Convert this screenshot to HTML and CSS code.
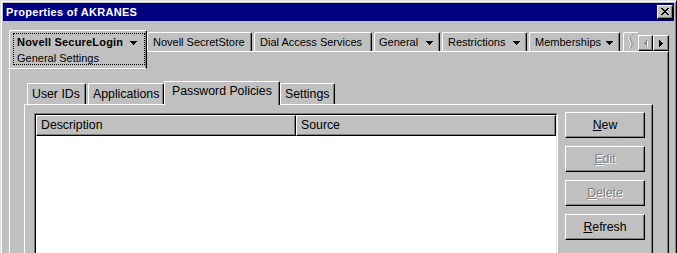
FILE: index.html
```html
<!DOCTYPE html>
<html>
<head>
<meta charset="utf-8">
<link rel="stylesheet" href="styles.css">
</head>
<body>
<div class="window">
  <div class="titlebar">
    <span class="title">Properties of AKRANES</span>
    <span class="close"><svg width="8" height="7" viewBox="0 0 8 7" shape-rendering="crispEdges"><path d="M0 0h2v1H0zM6 0h2v1H6zM1 1h2v1H1zM5 1h2v1H5zM2 2h4v1H2zM3 3h2v1H3zM2 4h4v1H2zM1 5h2v1H1zM5 5h2v1H5zM0 6h2v1H0zM6 6h2v1H6z" fill="#000"/></svg></span>
  </div>
  <div class="body">
    <div class="tabstrip">
      <div class="tab-main">
        <div class="focus">
          <div class="l1"><b>Novell SecureLogin</b><svg class="dd" width="7" height="4" viewBox="0 0 7 4" shape-rendering="crispEdges"><path d="M0 0h7v1H0zM1 1h5v1H1zM2 2h3v1H2zM3 3h1v1H3z" fill="#000"/></svg></div>
          <div class="l2">General Settings</div>
        </div>
      </div>
      <div class="tabs-right">
        <div class="tab w-ss">Novell SecretStore</div>
        <div class="tab w-dial">Dial Access Services</div>
        <div class="tab drop w-gen"><span>General</span><svg width="7" height="4" viewBox="0 0 7 4" shape-rendering="crispEdges"><path d="M0 0h7v1H0zM1 1h5v1H1zM2 2h3v1H2zM3 3h1v1H3z" fill="#000"/></svg></div>
        <div class="tab drop w-res"><span>Restrictions</span><svg width="7" height="4" viewBox="0 0 7 4" shape-rendering="crispEdges"><path d="M0 0h7v1H0zM1 1h5v1H1zM2 2h3v1H2zM3 3h1v1H3z" fill="#000"/></svg></div>
        <div class="tab drop w-mem"><span>Memberships</span><svg width="7" height="4" viewBox="0 0 7 4" shape-rendering="crispEdges"><path d="M0 0h7v1H0zM1 1h5v1H1zM2 2h3v1H2zM3 3h1v1H3z" fill="#000"/></svg></div>
        <div class="tab partial"><svg width="8" height="17" viewBox="0 0 8 17"><path d="M6 1 C3 3, 2 5, 4 8 C6 11, 5 13, 3 16" stroke="#fff" stroke-width="1" fill="none" transform="translate(-1,0)"/><path d="M6 1 C3 3, 2 5, 4 8 C6 11, 5 13, 3 16" stroke="#808080" stroke-width="1" fill="none"/></svg></div>
      </div>
      <div class="scroller">
        <span class="sbtn left"><svg width="4" height="7" viewBox="0 0 5 8" shape-rendering="crispEdges"><path d="M4 1h1v7H4zM3 2h1v5H3zM2 3h1v3H2zM1 4h1v1H1z" fill="#fff"/><path d="M3 0h1v7H3zM2 1h1v5H2zM1 2h1v3H1zM0 3h1v1H0z" fill="#808080"/></svg></span>
        <span class="sbtn right"><svg width="4" height="7" viewBox="0 0 4 7" shape-rendering="crispEdges"><path d="M0 0h1v7H0zM1 1h1v5H1zM2 2h1v3H2zM3 3h1v1H3z" fill="#000"/></svg></span>
      </div>
    </div>
    <div class="panel">
      <div class="subtabs">
        <div class="stab w-uid">User IDs</div>
        <div class="stab w-app">Applications</div>
        <div class="stab sel w-pp">Password Policies</div>
        <div class="stab w-set">Settings</div>
      </div>
      <div class="subpanel">
        <div class="listview">
          <div class="lv-inner">
            <div class="lv-header">
              <div class="hcell">Description</div>
              <div class="hcell">Source</div>
            </div>
          </div>
        </div>
        <div class="buttons">
          <div class="btn"><u>N</u>ew</div>
          <div class="btn disabled"><u>E</u>dit</div>
          <div class="btn disabled"><u>D</u>elete</div>
          <div class="btn"><u>R</u>efresh</div>
        </div>
      </div>
    </div>
  </div>
</div>
</body>
</html>
```

FILE: styles.css
```css
html, body {
  margin: 0;
  padding: 0;
}
body {
  width: 677px;
  height: 253px;
  overflow: hidden;
  background: #c0c0c0;
  font-family: "Liberation Sans", Arial, sans-serif;
  font-size: 11px;
  color: #000;
}
.window {
  box-sizing: border-box;
  width: 677px;
  height: 280px;
  border-top: 1px solid #dfdfdf;
  border-left: 1px solid #dfdfdf;
  border-right: 1px solid #000;
  border-bottom: 1px solid #000;
  box-shadow: inset 1px 1px #fff, inset -1px -1px #808080;
  padding: 2px;
  background: #c0c0c0;
}
.titlebar {
  height: 18px;
  background: #000080;
  display: flex;
  align-items: center;
  justify-content: space-between;
  padding: 0 1px 0 3px;
}
.title {
  color: #fff;
  font-weight: bold;
  letter-spacing: 0.3px;
  line-height: 18px;
}
.close {
  box-sizing: border-box;
  width: 16px;
  height: 14px;
  background: #c0c0c0;
  border-top: 1px solid #fff;
  border-left: 1px solid #fff;
  border-right: 1px solid #000;
  border-bottom: 1px solid #000;
  box-shadow: inset -1px -1px #808080;
  display: flex;
  align-items: center;
  justify-content: center;
  padding: 0 1px 1px 0;
}
.close svg { display: block; }
.body {
  padding: 9px 5px 0 6px;
}
.tabstrip {
  display: flex;
  align-items: flex-start;
  height: 21px;
}
.tab-main {
  position: relative;
  z-index: 1;
  box-sizing: border-box;
  width: 138px;
  height: 39px;
  flex: none;
  background: #c0c0c0;
  border-top: 1px solid #fff;
  border-left: 1px solid #fff;
  border-right: 1px solid #000;
  border-bottom: 1px solid #fff;
  border-top-left-radius: 2px;
  border-top-right-radius: 2px;
  box-shadow: inset -1px 0 #808080;
  padding: 2px 0 0 3px;
}
.focus {
  box-sizing: border-box;
  width: 132px;
  height: 32px;
  border: 1px dotted #000;
  padding: 0 3px;
  line-height: 16px;
}
.l1 {
  display: flex;
  align-items: center;
  height: 16px;
}
.l1 b {
  letter-spacing: 0.2px;
}
.l1 .dd {
  margin-left: 7px;
  margin-top: 1px;
}
.l2 {
  height: 14px;
  line-height: 14px;
  margin-top: 1px;
}
.tabs-right {
  flex: 1;
  display: flex;
  overflow: hidden;
  margin-top: 2px;
  height: 19px;
}
.tab {
  box-sizing: border-box;
  flex: none;
  height: 19px;
  border-top: 1px solid #fff;
  border-left: 1px solid #fff;
  border-right: 1px solid #000;
  border-top-left-radius: 2px;
  border-top-right-radius: 2px;
  box-shadow: inset -1px 0 #808080;
  padding: 0 0 0 5px;
  line-height: 18px;
  margin-right: 2px;
  white-space: nowrap;
}
.tab.drop {
  display: flex;
  align-items: center;
  justify-content: space-between;
  padding: 0 6px 0 4px;
}
.tab.drop svg { display: block; margin-top: 1px; }
.w-ss { width: 105px; }
.w-dial { width: 118px; }
.w-gen { width: 66px; }
.w-res { width: 85px; }
.w-mem { width: 91px; }
.tab.drop.w-res, .tab.drop.w-mem { padding-left: 5px; }
.tab.partial {
  width: 40px;
  margin-left: 1px;
  border-right: none;
  box-shadow: none;
  padding-left: 3px;
}
.tab.partial svg { display: block; }
.scroller {
  flex: none;
  display: flex;
  margin-top: 5px;
}
.sbtn {
  box-sizing: border-box;
  height: 16px;
  border-top: 1px solid #fff;
  border-left: 1px solid #fff;
  border-right: 1px solid #000;
  border-bottom: 1px solid #000;
  box-shadow: inset -1px -1px #808080;
  display: flex;
  align-items: center;
  justify-content: center;
  background: #c0c0c0;
}
.sbtn.left { width: 15px; }
.sbtn.right { width: 16px; }
.sbtn svg { display: block; }
.panel {
  box-sizing: border-box;
  height: 230px;
  border-top: 1px solid #fff;
  border-left: 1px solid #fff;
  border-right: 1px solid #000;
  box-shadow: inset -1px 0 #808080;
  padding: 29px 15px 0 14px;
  font-size: 12.3px;
}
.subtabs {
  display: flex;
  align-items: flex-start;
  height: 23px;
  padding-left: 3px;
}
.stab {
  box-sizing: border-box;
  flex: none;
  height: 21px;
  margin-top: 2px;
  border-top: 1px solid #fff;
  border-left: 1px solid #fff;
  border-right: 1px solid #000;
  border-top-left-radius: 2px;
  border-top-right-radius: 2px;
  box-shadow: inset -1px 0 #808080;
  padding-left: 4px;
  line-height: 20px;
  white-space: nowrap;
}
.stab.sel {
  position: relative;
  z-index: 1;
  height: 24px;
  margin-top: 0;
  margin-bottom: -1px;
  background: #c0c0c0;
  padding-left: 7px;
  line-height: 18px;
}
.w-uid { width: 59px; margin-right: 2px; }
.w-app { width: 76px; }
.w-pp { width: 116px; }
.w-set { width: 55px; }
.subpanel {
  box-sizing: border-box;
  height: 200px;
  border-top: 1px solid #fff;
  border-left: 1px solid #fff;
  border-right: 1px solid #000;
  box-shadow: inset -1px 0 #808080;
  padding: 7px 0 0 9px;
  display: flex;
  align-items: flex-start;
}
.listview {
  box-sizing: border-box;
  width: 524px;
  height: 180px;
  margin-top: 1px;
  margin-right: 7px;
  border-top: 1px solid #808080;
  border-left: 1px solid #808080;
  border-right: 1px solid #fff;
  border-bottom: 1px solid #fff;
}
.lv-inner {
  box-sizing: border-box;
  height: 100%;
  border-top: 1px solid #000;
  border-left: 1px solid #000;
  border-right: 1px solid #dfdfdf;
  border-bottom: 1px solid #dfdfdf;
  background: #fff;
}
.lv-header {
  display: flex;
  height: 21px;
}
.hcell {
  box-sizing: border-box;
  width: 260px;
  height: 21px;
  background: #c0c0c0;
  border-top: 1px solid #fff;
  border-left: 1px solid #fff;
  border-right: 1px solid #000;
  border-bottom: 1px solid #000;
  box-shadow: inset -1px -1px #808080;
  padding-left: 4px;
  line-height: 19px;
}
.buttons {
  display: flex;
  flex-direction: column;
  gap: 8px;
}
.btn {
  box-sizing: border-box;
  width: 80px;
  height: 26px;
  border-top: 1px solid #fff;
  border-left: 1px solid #fff;
  border-right: 1px solid #000;
  border-bottom: 1px solid #000;
  box-shadow: inset -1px -1px #808080;
  text-align: center;
  line-height: 24px;
  background: #c0c0c0;
}
.btn.disabled {
  color: #808080;
  text-shadow: 1px 1px 0 #fff;
}
```
